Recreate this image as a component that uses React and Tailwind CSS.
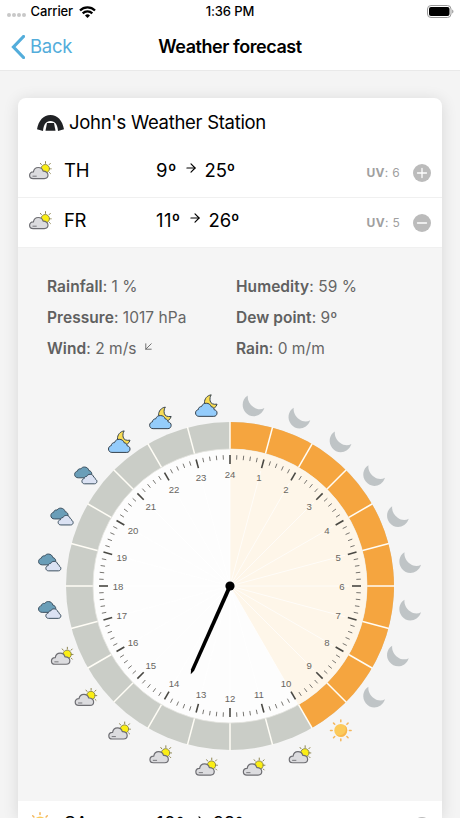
import { ArrowRight, ArrowDownLeft } from 'lucide-react';

const CX = 200;
const CY = 200;
const R_OUTER = 164;
const R_INNER = 137;
const R_ICONS = 182;
const R_LABELS = 112;

const polar = (deg, r) => {
  const a = (deg * Math.PI) / 180;
  return [CX + r * Math.sin(a), CY - r * Math.cos(a)];
};

const sector = (from, to, r) => {
  const [x1, y1] = polar(from, r);
  const [x2, y2] = polar(to, r);
  return `M${CX} ${CY} L${x1} ${y1} A${r} ${r} 0 ${to - from > 180 ? 1 : 0} 1 ${x2} ${y2} Z`;
};

// All glyphs are drawn in a 22x22 box
function PartlyCloudy() {
  return (
    <g strokeLinecap="round" strokeLinejoin="round">
      <g stroke="#8f8650" strokeWidth="1">
        <path d="M16.500 4.400V2.600M12.400 5.600l-1-1.300M20.200 5.600l1.100-1.200M21.600 9.800h.6M20.400 13.500l1 1" />
      </g>
      <circle cx="16.300" cy="9.700" r="4.200" fill="#fbee14" stroke="#85804a" strokeWidth="0.9" />
      <path
        d="M4.100 19.600C1.900 19.600.6 18.100.6 16.300.6 14.300 2.100 12.900 4 12.900h.4C4.900 9.900 6.800 8.500 9.300 8.500c2.600 0 4.200 1.500 4.800 3.700 2.700-.2 4.900 1.500 4.900 3.900 0 2.100-1.600 3.500-3.700 3.500z"
        fill="#dcdcdf" stroke="#6d6d72" strokeWidth="1.200"
      />
      <path d="M3.900 17.200h3.400" stroke="#6d6d72" strokeWidth="0.900" />
    </g>
  );
}

function CloudMoon() {
  return (
    <g stroke="#36424d" strokeWidth="1" strokeLinejoin="round">
      <path d="M16 .300c-4.100.5-7 4-6.700 8.100.2 3 2.500 5.400 5.900 5.700 3.200.3 5.900-1.300 6.600-4.500-3.600.6-6.400-.5-6.900-3.200-.4-2.300-.1-4.600 1.100-6.100z" fill="#f8dc54" />
      <path
        d="M3.700 21.800C1.600 21.800.3 20.300.3 18.400c0-1.800 1.100-3 2.800-3.400.1-1.900 1.400-3 3.200-3C7 9.800 8.800 8.700 11 8.700c2.500 0 4.300 1.200 4.900 3.400 1.700.2 2.800 1.300 2.900 3 1.800.3 3 1.500 3 3.300 0 1.900-1.300 3.400-3.200 3.400z"
        fill="#94ccfb"
      />
    </g>
  );
}

function DarkClouds() {
  return (
    <g stroke="#3c5060" strokeWidth="1" strokeLinejoin="round">
      <path
        d="M3.600 13.600C1.500 13.600 0 12.200 0 10.300 0 8.500 1.200 7.200 2.900 6.900 3 5.200 4.500 4.300 6.200 4.700 7 3.300 8.500 2.700 10 2.800c2.200.1 3.900 1.500 4.200 3.500 1.800.3 3 1.700 3 3.500 0 2.200-1.500 3.800-3.700 3.800z"
        fill="#6a9eb8"
      />
      <path
        d="M10 19.600c-1.600 0-2.700-1.100-2.700-2.600 0-1.400.9-2.400 2.300-2.600.1-1.400 1.100-2.300 2.500-2.200.6-1.400 1.800-2.100 3.400-2.100 1.900 0 3.300 1.100 3.600 2.800 1 .2 1.600 1 1.600 2.100 1 .3 1.600 1.100 1.600 2.100 0 1.500-1 2.500-2.500 2.500z"
        fill="#dbe2f3"
      />
    </g>
  );
}

function Moon() {
  return <path d="M5 1C-.8 4.600-1.600 12.200 2.400 17.400c4.800 6.400 15.700 6 19.200-3.900-3.200 1.900-7.800 1.600-11-1C6.800 9.700 4.600 5.800 5 1z" fill="#bfc4c6" />;
}

function Sun() {
  return (
    <g>
      {[0, 45, 90, 135, 180, 225, 270, 315].map(a => (
        <path key={a} d="M11 2.400V.7" stroke="#f3b65c" strokeWidth="1.500" strokeLinecap="round" transform={`rotate(${a} 11 11)`} />
      ))}
      <circle cx="11" cy="11" r="6.500" fill="#fcca5a" />
      <path d="M14.800 5.700a6.500 6.500 0 0 1-9.100 9.100 6.500 6.500 0 1 0 9.100-9.100z" fill="#f8b64c" />
    </g>
  );
}

const GLYPHS = { partly: PartlyCloudy, cloudMoon: CloudMoon, clouds: DarkClouds, moon: Moon, sun: Sun };

const HOURS = [
  ...Array(9).fill('moon'),
  'sun',
  ...Array(7).fill('partly'),
  ...Array(4).fill('clouds'),
  ...Array(3).fill('cloudMoon'),
];

function WeatherIcon({ type }) {
  const Glyph = GLYPHS[type];
  return (
    <svg viewBox="0 0 22 22" className="-mt-[6px] h-[22px] w-[22px] shrink-0 overflow-visible" fill="none">
      <Glyph />
    </svg>
  );
}

function ForecastDial() {
  return (
    <svg viewBox="0 0 400 400" className="-ml-[12px] h-[400px] w-[400px] max-w-none" fill="none">
      <circle cx={CX} cy={CY} r={R_OUTER} fill="#cacdc7" />
      <path d={sector(0, 150, R_OUTER)} fill="#f5a53f" />
      {HOURS.map((_, i) => {
        const [x, y] = polar(i * 15, R_OUTER + 0.5);
        return <path key={i} d={`M${CX} ${CY}L${x} ${y}`} stroke="#fffdf6" strokeWidth="1.5" />;
      })}
      <circle cx={CX} cy={CY} r={R_INNER} fill="#fdfdfd" stroke="#e5e4e0" strokeWidth="0.8" />
      <path d={sector(0, 150, R_INNER)} fill="#fef6e9" />
      {HOURS.map((_, i) => {
        const [x, y] = polar(i * 15, 119);
        return <path key={i} d={`M${CX} ${CY}L${x} ${y}`} stroke="#ffffff" strokeOpacity="0.7" strokeWidth="1" />;
      })}

      {/* five ticks per hour */}
      {Array.from({ length: 120 }, (_, i) => {
        const major = i % 5 === 0;
        const [x1, y1] = polar(i * 3, 131);
        const [x2, y2] = polar(i * 3, major ? 122 : 126.500);
        return (
          <path key={i} d={`M${x1} ${y1}L${x2} ${y2}`} stroke={major ? '#494843' : '#696762'} strokeWidth={major ? 1.6 : 0.9} />
        );
      })}
      {HOURS.map((_, i) => {
        const [x, y] = polar((i + 1) * 15, R_LABELS);
        return (
          <text key={i} x={x} y={y + 3.600} textAnchor="middle" fill="#686661" className="font-['Liberation_Sans',sans-serif] text-[9.600px]">
            {i + 1}
          </text>
        );
      })}

      {HOURS.map((type, i) => {
        const [x, y] = polar(i * 15 + 7.5, R_ICONS);
        const Glyph = GLYPHS[type];
        return (
          <g key={i} transform={`translate(${x - 11} ${y - 11})`}>
            <Glyph />
          </g>
        );
      })}

      {/* hand, points at 13:36 */}
      <g transform={`rotate(204 ${CX} ${CY})`} fill="#000">
        <path d="M198 200L198.300 108L200 103.500L201.700 108L202 200z" />
      </g>
      <circle cx={CX} cy={CY} r="4.600" fill="#000" />
    </svg>
  );
}

function DayRow({ icon, day, min, max, uv, open }) {
  return (
    <div className="flex h-[50px] shrink-0 items-center border-b border-[#f0f0f0] bg-white pr-[11px] pl-[11px]">
      <WeatherIcon type={icon} />
      <span className="-mt-[3px] ml-[13px] w-[92px] text-[18.500px] tracking-[-0.3px]">{day}</span>
      <span className="-mt-[3px] flex items-center text-[18.500px] tracking-[-0.2px]">
        <span className="tracking-[0.4px]">{min}º</span>
        <ArrowRight size={14} strokeWidth={2} className="mx-[7px] -mt-[6px]" />
        {max}º
      </span>
      <span className="ml-auto mt-[1px] text-[12px] tracking-[0.3px] text-[#a0a0a0]">
        <b>UV</b>: {uv}
      </span>
      <svg viewBox="0 0 18 18" className="mt-px ml-[13px] h-[18px] w-[18px]">
        <circle cx="9" cy="9" r="9" fill="#bbbbbb" />
        <path d={open ? 'M4.500 9h9' : 'M4.500 9h9M9 4.500v9'} stroke="#fff" strokeWidth="1.300" strokeLinecap="round" />
      </svg>
    </div>
  );
}

function Detail({ label, children }) {
  return (
    <p className="flex h-[31px] items-center text-[15.500px] tracking-[0.05px] whitespace-pre text-[#666666]">
      <b className="font-semibold text-[#606060]">{label}</b>: {children}
    </p>
  );
}

export default function App() {
  return (
    <div className="flex h-[818px] w-[460px] flex-col overflow-hidden bg-[#f4f4f4] font-['Inter',sans-serif] text-black">
      <header className="h-[71px] shrink-0 border-b border-[#e9e9e9] bg-white">
        <div className="grid h-[23px] grid-cols-3 items-center px-[7px] text-[13px] font-medium tracking-[-0.1px]">
          <div className="flex items-center">
            <span className="mt-[7px] mr-[5px] flex gap-[1.500px]">
              {[0, 1, 2, 3].map(i => <i key={i} className="h-[3.500px] w-[3.500px] rounded-full bg-[#c8c8c8]" />)}
            </span>
            Carrier
            <svg viewBox="0 0 17 12" className="ml-[6px] h-[12px] w-[17px]" fill="none" stroke="#000" strokeWidth="2.300">
              <path d="M1 4.500a10.800 10.800 0 0 1 15 0M3.700 7.300a6.900 6.900 0 0 1 9.600 0" />
              <path d="M8.500 12L6 9.500a3.600 3.600 0 0 1 5 0z" fill="#000" stroke="none" />
            </svg>
          </div>
          <span className="text-center">1:36 PM</span>
          <svg viewBox="0 0 27 13" className="-mr-[1px] h-[13px] w-[27px] justify-self-end">
            <rect x="0.500" y="0.500" width="23.500" height="12" rx="3.500" fill="none" stroke="#999" />
            <rect x="2" y="2" width="20.500" height="9" rx="2" fill="#000" />
            <path d="M25.200 4.500c1.700.6 1.700 3.400 0 4z" fill="#999" />
          </svg>
        </div>
        <div className="grid h-[47.500px] grid-cols-3 items-center px-[11px]">
          <span className="flex items-center gap-[5px] text-[18.500px] tracking-[-0.3px] text-[#53addb]">
            <svg viewBox="0 0 14 24" className="h-[24px] w-[14px]" fill="none" stroke="#53addb" strokeWidth="3.200">
              <path d="M12.500 1.500L2.500 12l10 10.500" strokeLinecap="round" />
            </svg>
            Back
          </span>
          <h1 className="text-center text-[18px] font-semibold tracking-[-0.450px] whitespace-nowrap">Weather forecast</h1>
        </div>
      </header>

      <main className="mx-[18px] mt-[27px] flex flex-col overflow-hidden rounded-t-[8px] bg-white shadow-[0_2px_16px_rgba(0,0,0,0.12)]">
        <div className="flex h-[50px] shrink-0 items-center gap-[5px] pl-[19px] text-[18.500px] tracking-[-0.3px]">
          <svg viewBox="0 0 27 16" className="h-[16px] w-[27px]" fill="#202225">
            <path d="M0 14.300C1.500 5.500 6.500 0 13.500 0S25.500 5.500 27 14.300L21 16C20.500 9.500 18 6 13.500 6S6.500 9.500 6 16z" />
            <path d="M10 8h7l1.500 7.800h-10z" />
          </svg>
          John's Weather Station
        </div>
        <DayRow icon="partly" day="TH" min={9} max={25} uv={6} />
        <DayRow icon="partly" day="FR" min={11} max={26} uv={5} open />

        <section className="h-[553px] shrink-0 bg-[#f5f5f5] pt-[23px]">
          <div className="grid grid-cols-[189px_1fr] pl-[29px]">
            <Detail label="Rainfall">1 %</Detail>
            <Detail label="Humedity">59 %</Detail>
            <Detail label="Pressure">1017 hPa</Detail>
            <Detail label="Dew point">9º</Detail>
            <Detail label="Wind">
              2 m/s
              <ArrowDownLeft size={13} strokeWidth={1.7} className="-mt-[4px] ml-[5px]" />
            </Detail>
            <Detail label="Rain">0 m/m</Detail>
          </div>
          <div className="mt-[22px] pl-[24px]">
            <ForecastDial />
          </div>
        </section>

        <DayRow icon="sun" day="SA" min={10} max={28} uv={6} />
      </main>
    </div>
  );
}
